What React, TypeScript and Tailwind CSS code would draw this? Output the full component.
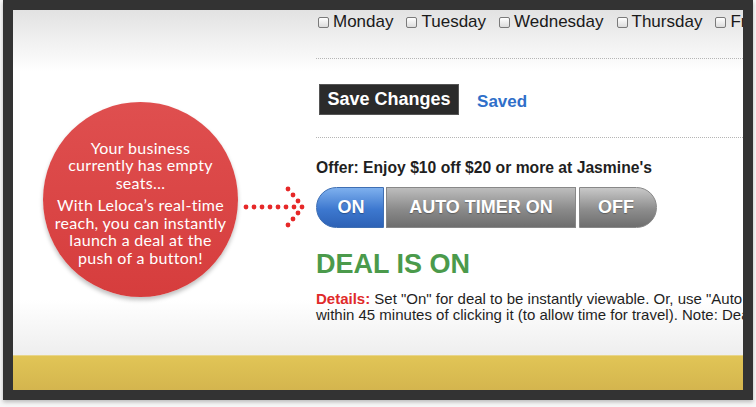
import React from 'react';

const days = ['Monday', 'Tuesday', 'Wednesday', 'Thursday', 'Friday'];

function Box() {
  return <span className="inline-block w-[11px] h-[11px] mr-[4px] rounded-[2px] border border-[#7a7a7a] bg-[linear-gradient(to_bottom,#fff,#dcdcdc)] align-[-1px]" />;
}

function Arrow() {
  const dots: [number, number][] = [];
  for (let i = 0; i < 8; i++) dots.push([3 + i * 8, 21]);
  dots.push([45, 3], [50, 9], [55, 15], [55, 27], [50, 33], [45, 39]);
  return (
    <svg width="62" height="44" viewBox="0 0 62 44">
      {dots.map(([x, y], i) => <circle key={i} cx={x} cy={y} r="2.4" fill="#e62828" />)}
    </svg>
  );
}

export default function App() {
  return (
    <div className="w-[756px] h-[407px] bg-[#f7f7f7] pl-[3px] font-['Liberation_Sans',Arial,sans-serif]">
      <div className="w-[750px] h-[400px] bg-[#333333] p-[10px] shadow-[0_2px_4px_rgba(0,0,0,0.25)]">
        <div className="w-[730px] h-[380px] flex flex-col overflow-hidden bg-[linear-gradient(to_bottom,#e2e2e2_0px,#ffffff_62px,#ffffff_290px,#eeeeee_345px)]">
          <div className="flex-1 flex min-h-0">
            <div className="w-[303px] shrink-0 pl-[30px] pt-[92px] flex items-start">
              <div className="w-[195px] h-[195px] rounded-full bg-[linear-gradient(to_bottom,#df4f4f,#d63d3d)] shadow-[0_3px_4px_rgba(0,0,0,0.25)] flex flex-col items-center justify-center text-white text-center whitespace-nowrap font-['Lato','Open_Sans',sans-serif] text-[16px] leading-[17.5px] tracking-[0.3px]">
                <div className="pt-[6px]">Your business<br />currently has empty<br />seats…</div>
                <div className="mt-[5px]">With Leloca’s real-time<br />reach, you can instantly<br />launch a deal at the<br />push of a button!</div>
              </div>
              <div className="ml-[5px] mt-[84px]"><Arrow /></div>
            </div>
            <div className="flex-1 min-w-0 whitespace-nowrap text-[#1a1a1a]">
              <div className="h-[48px] pt-[2px] pl-[2px] text-[17px] leading-[20px]">
                {days.map(d => (
                  <span key={d} className="mr-[13px]"><Box />{d}</span>
                ))}
              </div>
              <div className="border-t border-dotted border-[#b5b5b5]" />
              <div className="h-[78px] pt-[25px] pl-[3px] flex items-start gap-[18px]">
                <button className="h-[31px] px-[7.5px] bg-[#2b2b2b] text-white font-bold text-[18px] border border-[#555]">Save Changes</button>
                <span className="mt-[5px] text-[#2f6fc9] font-bold text-[17px]">Saved</span>
              </div>
              <div className="border-t border-dotted border-[#b5b5b5]" />
              <div className="pt-[20px] text-[15.7px] font-bold leading-[20px] text-[#1f1f1f]">Offer: Enjoy $10 off $20 or more at Jasmine's</div>
              <div className="mt-[9px] flex h-[41px] w-[341px] text-white font-bold text-[18px] [text-shadow:0_1px_1px_rgba(0,0,0,0.3)]">
                <div className="w-[68px] rounded-l-full bg-[linear-gradient(to_bottom,#7eb0ee,#3d78cf_55%,#2d62b6)] border border-[#3f6fb3] flex items-center justify-center pl-[2px]">ON</div>
                <div className="w-[2px] bg-white" />
                <div className="w-[190px] bg-[linear-gradient(to_bottom,#bdbdbd,#8a8a8a_55%,#6e6e6e)] border border-[#888] flex items-center justify-center">AUTO TIMER ON</div>
                <div className="w-[3px] bg-white" />
                <div className="flex-1 rounded-r-full bg-[linear-gradient(to_bottom,#c8c8c8,#8d8d8d_55%,#6e6e6e)] border border-[#888] flex items-center justify-center pr-[4px]">OFF</div>
              </div>
              <div className="mt-[21px] text-[#4b9a4b] font-bold text-[27px] leading-[30px]">DEAL IS ON</div>
              <div className="mt-[12px] text-[15px] leading-[16px] text-[#1f1f1f]">
                <div><span className="text-[#e02a2a] font-bold">Details:</span> Set "On" for deal to be instantly viewable. Or, use "Auto Timer On" to have the deal turn on automatically</div>
                <div>within 45 minutes of clicking it (to allow time for travel). Note: Deals that are on will be shown to nearby users.</div>
              </div>
            </div>
          </div>
          <div className="h-[35px] shrink-0 border-t border-[#e8d58a] bg-[linear-gradient(to_bottom,#e1c556,#d4b54e)]" />
        </div>
      </div>
    </div>
  );
}
